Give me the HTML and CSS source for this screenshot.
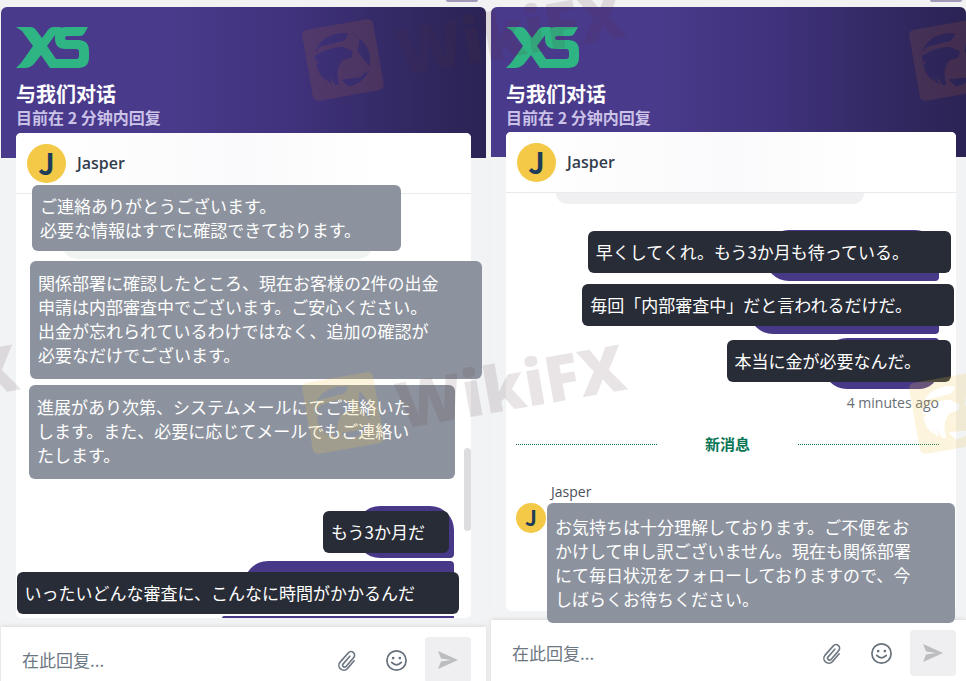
FILE: index.html
```
<!DOCTYPE html>
<html lang="zh-CN">
<head>
    <meta charset="UTF-8">
    <meta name="viewport" content="width=device-width, initial-scale=1.0">
    <title>与我们对话</title>
    <link rel="stylesheet" href="styles.css">
</head>
<body>
    <!-- shared shapes -->
    <svg class="defs" aria-hidden="true">
        <symbol id="logo" viewBox="0 0 73 42">
            <path fill="#2fb583" d="M0 0H14Q18 0 20 3L26 11L32 3Q34 0 38 0H45L31 19L40 32H60Q63 32 63 29V25Q63 22 60 22H50Q39 22 39 12V10Q39 0 50 0H72L68 7Q67 9 64 9H52Q49 9 49 11Q49 13 52 13H62Q73 13 73 24V30Q73 41 62 41H34L25 28L18 37Q14 41 9 41H0L5 36L17 19L6 4Z"/>
        </symbol>
        <symbol id="clip" viewBox="0 0 24 24">
            <path fill="none" stroke="#6f7984" stroke-width="1.7" stroke-linecap="round" d="M15.500 7.500L8.500 15.500a2 2 0 0 0 3 2.700L19.500 9a3.700 3.700 0 0 0-5.600-5L5.300 13.700a5.100 5.100 0 0 0 7.600 6.800L20 12.300"/>
        </symbol>
        <symbol id="smile" viewBox="0 0 24 24">
            <circle cx="12" cy="12" r="10" fill="none" stroke="#68727c" stroke-width="1.800"/>
            <circle cx="8.500" cy="9.500" r="1.400" fill="#68727c"/>
            <circle cx="15.500" cy="9.500" r="1.400" fill="#68727c"/>
            <path fill="none" stroke="#68727c" stroke-width="1.800" stroke-linecap="round" d="M7 14q5 5 10 0"/>
        </symbol>
        <symbol id="send" viewBox="0 0 22 20">
            <path fill="#bcbdc0" d="M1 1L21 10L1 19L4 11.500L14 10L4 8.500Z"/>
        </symbol>
        <symbol id="mark" viewBox="0 0 340 130" overflow="visible">
            <g transform="rotate(-10 45 85)">
                <path fill="currentColor" fill-rule="evenodd" d="M15 49H75Q81 49 81 55V115Q81 121 75 121H15Q9 121 9 115V55Q9 49 15 49ZM19 73Q26 58 45 58Q51 58 55 60L50 66L24 68ZM58 61Q72 70 72 85Q72 91 70 96L61 79L65 67ZM69 99Q61 112 46 112L40 104L59 105ZM18 76Q33 70 47 72L56 78L54 84L45 85Q35 92 37 109L33 108L29 98L30 107Q26 104 24 97L25 103Q18 95 18 85L22 82L18 82Z"/>
                <text class="mark-text" x="99" y="111">WikiFX</text>
            </g>
        </symbol>
    </svg>

    <main class="widgets">
        <section class="widget">
            <header class="brand">
                <svg class="logo" role="img" aria-label="XS"><use href="#logo"/></svg>
                <h1>与我们对话</h1>
                <p>目前在 2 分钟内回复</p>
            </header>
            <div class="card">
                <div class="agent">
                    <span class="avatar">J</span>
                    <h2>Jasper</h2>
                </div>
                <div class="messages first" lang="ja">
                    <p class="bubble received thanks">ご連絡ありがとうございます。<br>必要な情報はすでに確認できております。</p>
                    <p class="bubble received review">関係部署に確認したところ、現在お客様の2件の出金<br>申請は内部審査中でございます。ご安心ください。<br>出金が忘れられているわけではなく、追加の確認が<br>必要なだけでございます。</p>
                    <p class="bubble received progress">進展があり次第、システムメールにてご連絡いた<br>します。また、必要に応じてメールでもご連絡い<br>たします。</p>
                    <p class="bubble sent months">もう3か月だ</p>
                    <p class="bubble sent what">いったいどんな審査に、こんなに時間がかかるんだ</p>
                </div>
                <span class="scrollbar"></span>
            </div>
            <form class="composer">
                <input type="text" placeholder="在此回复..." aria-label="在此回复">
                <button type="button" class="tool" aria-label="附件"><svg><use href="#clip"/></svg></button>
                <button type="button" class="tool" aria-label="表情"><svg><use href="#smile"/></svg></button>
                <button type="submit" class="send" aria-label="发送"><svg><use href="#send"/></svg></button>
            </form>
        </section>

        <section class="widget narrow">
            <header class="brand">
                <svg class="logo" role="img" aria-label="XS"><use href="#logo"/></svg>
                <h1>与我们对话</h1>
                <p>目前在 2 分钟内回复</p>
            </header>
            <div class="card">
                <div class="agent">
                    <span class="avatar">J</span>
                    <h2>Jasper</h2>
                </div>
                <div class="messages second" lang="ja">
                    <p class="bubble sent hurry">早くしてくれ。もう3か月も待っている。</p>
                    <p class="bubble sent always">毎回「内部審査中」だと言われるだけだ。</p>
                    <p class="bubble sent money">本当に金が必要なんだ。</p>
                    <time>4 minutes ago</time>
                    <div class="divider" lang="zh-CN"><span>新消息</span></div>
                    <p class="sender">Jasper</p>
                    <div class="reply">
                        <span class="avatar small">J</span>
                        <p class="bubble received">お気持ちは十分理解しております。ご不便をお<br>かけして申し訳ございません。現在も関係部署<br>にて毎日状況をフォローしておりますので、今<br>しばらくお待ちください。</p>
                    </div>
                </div>
            </div>
            <form class="composer">
                <input type="text" placeholder="在此回复..." aria-label="在此回复">
                <button type="button" class="tool" aria-label="附件"><svg><use href="#clip"/></svg></button>
                <button type="button" class="tool" aria-label="表情"><svg><use href="#smile"/></svg></button>
                <button type="submit" class="send" aria-label="发送"><svg><use href="#send"/></svg></button>
            </form>
        </section>
    </main>

    <svg class="watermark" aria-hidden="true">
        <g class="mark-dark">
            <use href="#mark" x="298" y="-25" width="340" height="130"/>
            <use href="#mark" x="905" y="-25" width="340" height="130"/>
        </g>
        <g class="mark-light">
            <use href="#mark" x="-309" y="328" width="340" height="130"/>
            <use href="#mark" x="298" y="328" width="340" height="130"/>
            <use href="#mark" x="905" y="328" width="340" height="130"/>
        </g>
    </svg>
</body>
</html>
```

FILE: styles.css
```
* {
    box-sizing: border-box;
}
body {
    margin: 0;
    height: 100vh;
    position: relative;
    overflow: hidden;
    background: #f2f2f3;
    font-family: "Open Sans", "Noto Sans CJK SC", sans-serif;
}
h1, h2, p {
    margin: 0;
}
.defs {
    position: absolute;
    width: 0;
    height: 0;
}
.widgets {
    display: grid;
    grid-template-columns: 485fr 475fr;
    gap: 5px;
    padding: 7px 0 0 1px;
}
.widget {
    position: relative;
    display: flex;
    flex-direction: column;
    min-width: 0;
    border-radius: 6px 6px 0 0;
    background: linear-gradient(90deg, #4a3a8b 35%, #40327c 60%, #342a66 80%, #2b2354) no-repeat 0 0 / 100% 151px, #f1f3f5;
}
/* bottom edge of the close pill above the widget */
.widget::before {
    content: "";
    position: absolute;
    top: -7px;
    right: 8px;
    width: 32px;
    height: 2px;
    border-radius: 0 0 8px 8px;
    background: #a29ab8;
}
.narrow {
    background-size: 100% 150px, auto;
}
.narrow::before {
    right: 4px;
}

/* header */
.brand {
    padding: 20px 15px 6px;
    color: #fff;
    font-family: "Noto Sans CJK SC", sans-serif;
}
.narrow .brand {
    padding-bottom: 5px;
}
.logo {
    display: block;
    width: 73px;
    height: 42px;
    margin-bottom: 12px;
}
.brand h1 {
    font-size: 20px;
    line-height: 26px;
    font-weight: 700;
}
.brand p {
    font-size: 16px;
    line-height: 20px;
    font-weight: 700;
    color: #cbc2e8;
}
.card {
    position: relative;
    margin: 0 15px;
    background: #fff;
    border-radius: 5px;
}
.narrow .card {
    margin-right: 10px;
}
.agent {
    display: flex;
    align-items: center;
    gap: 11px;
    height: 61px;
    padding-left: 11px;
    border-bottom: 1px solid #e8eaec;
    border-radius: 5px 5px 0 0;
    background: linear-gradient(90deg, #fff, #fafafc 50%, #fff 80%);
}
.agent h2 {
    font-size: 16px;
    font-weight: 600;
    color: #333d4d;
}
.avatar {
    flex: none;
    width: 39px;
    height: 39px;
    border-radius: 50%;
    background: #f3c947;
    color: #1d3c58;
    font: 700 29px/37px "Noto Sans CJK SC", sans-serif;
    text-align: center;
}
.avatar.small {
    width: 30px;
    height: 30px;
    font-size: 21px;
    line-height: 28px;
}

/* messages */
.messages {
    position: relative;
    z-index: 0;
    display: flex;
    flex-direction: column;
    align-items: flex-start;
    font-family: "Noto Sans CJK JP", sans-serif;
}
.bubble {
    position: relative;
    padding: 9px 42px 9px 8px;
    border-radius: 6px;
    font-size: 17px;
    line-height: 24px;
    white-space: nowrap;
    color: #fff;
}
.received {
    padding: 10px 44px 12px 8px;
    background: #8d939e;
}
.sent {
    background: #282c36;
}
.sent::before {
    content: "";
    position: absolute;
    z-index: -1;
    background: #483888;
    border-radius: 24px 4px 4px 24px;
}
.thanks {
    margin: -9px 0 10px 16px;
    padding: 9px 40px 9px 8px;
}
.thanks::after {
    content: "";
    position: absolute;
    z-index: -1;
    left: 30px;
    right: 28px;
    bottom: -8px;
    height: 30px;
    border-radius: 24px;
    background: #f1f3f3;
}
.review {
    margin: 0 0 6px 14px;
}
.progress {
    margin: 0 0 32px 13px;
}
.first .sent {
    align-self: flex-end;
}
.first .months {
    margin: 0 22px 19px 0;
    padding-right: 24px;
}
.months::before {
    inset: -5px -5px -5px 33px;
    border-radius: 24px 24px 4px 24px;
}
.what {
    margin: 0 12px 2px 0;
    padding-right: 44px;
}
.what::before {
    inset: -11px 5px 4px 227px;
}
.first::after {
    content: "";
    align-self: flex-end;
    width: 232px;
    height: 2px;
    margin-right: 17px;
    border-radius: 24px 4px 0 0;
    background: #483888;
}
.scrollbar {
    position: absolute;
    right: 0;
    top: 315px;
    width: 7px;
    height: 83px;
    border-radius: 4px;
    background: #dddddf;
}

.second .sent {
    align-self: flex-end;
}
.second::before {
    content: "";
    align-self: center;
    width: 308px;
    height: 11px;
    margin: 0 0 27px -42px;
    border-radius: 0 0 24px 24px;
    background: #f0f0f2;
}
.hurry {
    margin: 0 5px 11px 0;
}
.hurry::before {
    inset: -1px 12px -8px 177px;
    border-radius: 24px 24px 4px 24px;
}
.always {
    margin: 0 2px 14px 0;
}
.always::before {
    inset: 0 15px -8px 167px;
}
.money {
    margin: 0 5px 11px 0;
    padding-right: 30px;
}
.money::before {
    inset: -2px 12px -7px 96px;
    border-radius: 24px 4px 20px 24px;
}
.second time {
    align-self: flex-end;
    margin: 0 17px 20px 0;
    font: 14px/20px "Open Sans", sans-serif;
    color: #686e75;
}
.divider {
    align-self: stretch;
    display: grid;
    grid-template-columns: 1fr 1fr 1fr;
    align-items: center;
    margin: 0 17px 27px 10px;
    color: #087555;
    font: 700 15px/22px "Noto Sans CJK SC", sans-serif;
    text-align: center;
}
.divider::before, .divider::after {
    content: "";
    border-top: 1px dotted #087555;
}
.sender {
    margin-left: 45px;
    font: 14px/20px "Open Sans", sans-serif;
    color: #4a5058;
}
.reply {
    display: flex;
    gap: 1px;
    margin: 1px 0 -12px 10px;
}
.reply .bubble {
    padding-top: 12px;
}

/* reply box */
.composer {
    display: flex;
    align-items: center;
    gap: 8px;
    height: 66px;
    margin-top: 9px;
    padding: 0 15px 0 21px;
    background: #fff;
    box-shadow: 0 -1px 4px rgba(0, 0, 0, .1);
}
.narrow .composer {
    padding-right: 10px;
}
.composer input {
    flex: 1;
    min-width: 0;
    padding: 0;
    border: 0;
    outline: 0;
    background: none;
    font: 17px/24px "Noto Sans CJK SC", sans-serif;
}
.composer input::placeholder {
    color: #6c7782;
}
.composer button {
    display: grid;
    place-items: center;
    padding: 0;
    border: 0;
    background: none;
}
.tool {
    width: 42px;
    height: 42px;
}
.tool svg {
    width: 23px;
    height: 23px;
}
.composer .send {
    width: 46px;
    height: 46px;
    border-radius: 4px;
    background: #efeff1;
}
.send svg {
    width: 22px;
    height: 20px;
}
.watermark {
    position: absolute;
    inset: 0;
    width: 100%;
    height: 100%;
    pointer-events: none;
}
.mark-dark {
    color: rgba(160, 90, 60, .2);
}
.mark-light {
    color: rgba(240, 200, 80, .2);
}
.mark-text {
    font: 800 64px "Open Sans", sans-serif;
    fill: #583038;
    fill-opacity: .13;
}
```
